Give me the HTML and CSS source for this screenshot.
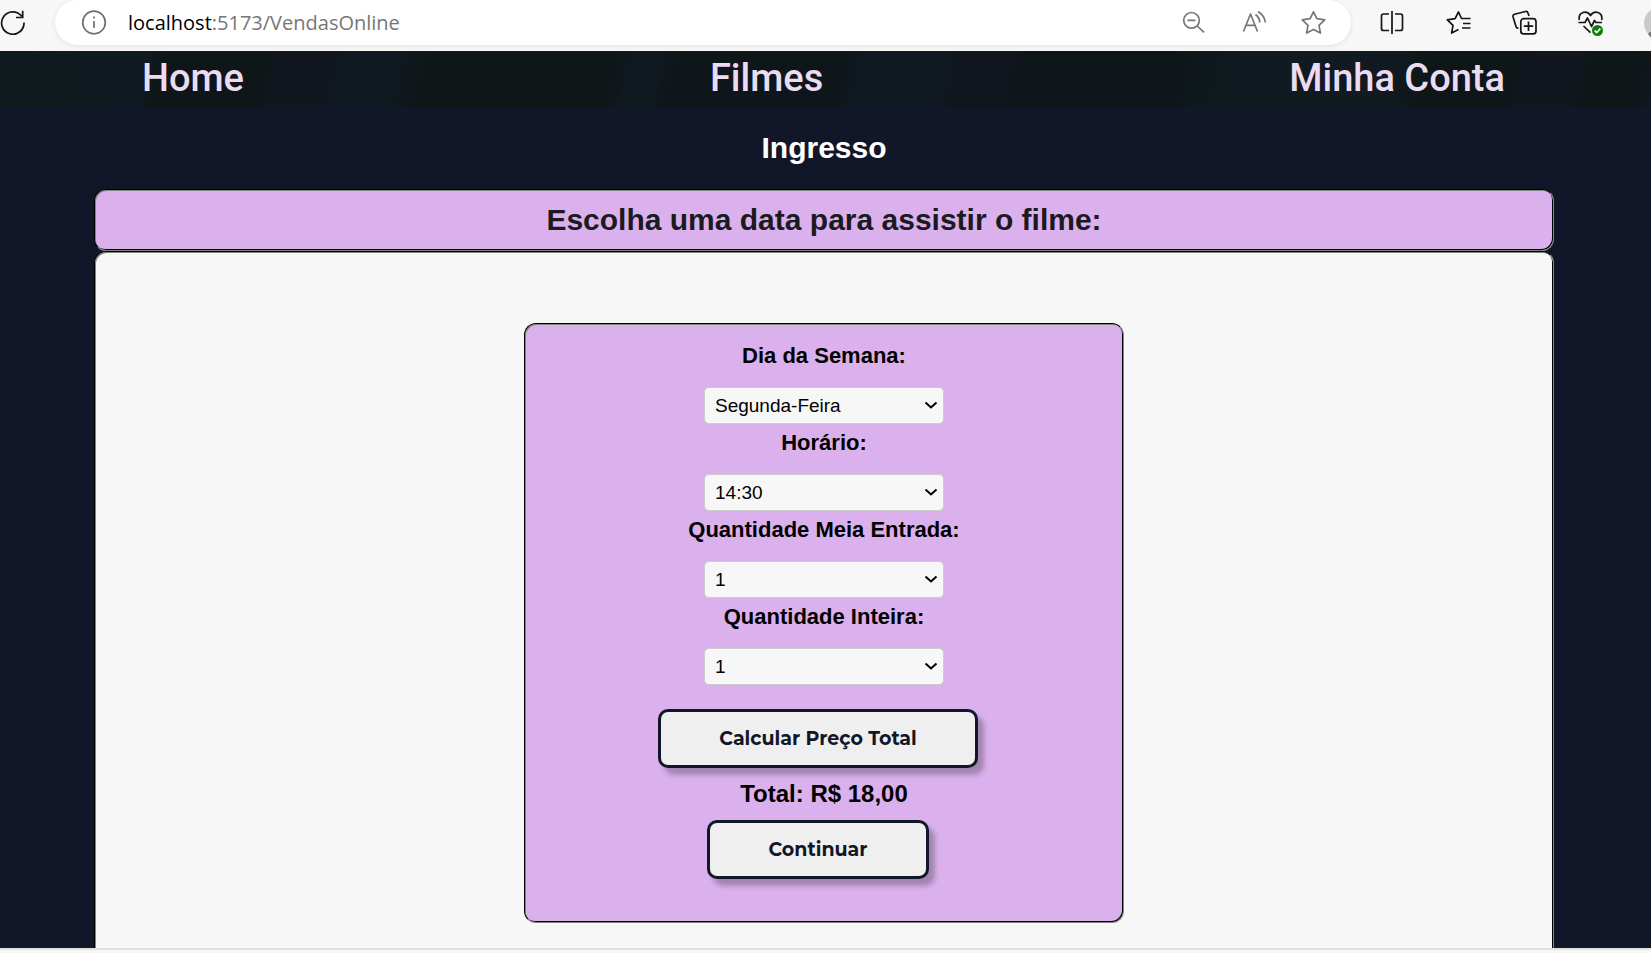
FILE: index.html
```html
<!DOCTYPE html>
<html lang="pt-BR">
<head>
<meta charset="utf-8">
<title>Ingresso</title>
<link rel="stylesheet" href="styles.css">
</head>
<body>
<header class="toolbar">
  <button class="tool reload" aria-label="Atualizar"><svg width="26" height="26" viewBox="0 0 26 26"><path d="M24 12.5A11.2 11.2 0 1 1 21.7 6.2M22.7 .8V7.5H16"/></svg></button>
  <div class="address">
    <svg class="info" width="26" height="26" viewBox="0 0 26 26"><circle cx="13" cy="12.500" r="11.3"/><path d="M13 11V18M13 6.500V8.500"/></svg>
    <span class="url"><span class="host">localhost</span>:5173/VendasOnline</span>
    <button class="tool muted" aria-label="Zoom"><svg width="26" height="26" viewBox="0 0 26 26"><circle cx="10.500" cy="10.300" r="7.8"/><path d="M6.500 10.300H14.500M16.200 16L23 22.300"/></svg></button>
    <button class="tool muted" aria-label="Ler em voz alta"><svg width="26" height="26" viewBox="0 0 26 26"><path d="M2.500 21.500L9.500 4L16.500 21.500M5 15.300H14M14.500 4.500Q18.500 7.500 18.800 12.500M17 1.500Q23.500 5.500 24.300 12.500"/></svg></button>
    <button class="tool muted" aria-label="Favoritar"><svg width="26" height="26" viewBox="0 0 26 26"><path d="M12.500 1.800L15.900 8.700L23.700 9.900L18 15.400L19.400 23.100L12.500 19.500L5.600 23.100L7 15.400L1.300 9.900L9.100 8.700Z"/></svg></button>
  </div>
  <button class="tool" aria-label="Dividir tela"><svg width="26" height="26" viewBox="0 0 26 26"><path d="M10 4H4.500Q2.500 4 2.500 6V18.500Q2.500 20.500 4.500 20.500H10M16 4H21.500Q23.500 4 23.500 6V18.500Q23.500 20.500 21.500 20.500H16M13 1V24"/></svg></button>
  <button class="tool" aria-label="Favoritos"><svg width="26" height="26" viewBox="0 0 26 26"><path d="M18 8.500H16.500L13.500 2L10.100 8.700L2.300 9.900L8 15.400L6.600 23.100L13.500 19.500M16 8.500H25.500M18 13.500H25.500M17 18H25.500"/></svg></button>
  <button class="tool" aria-label="Coleções"><svg width="26" height="26" viewBox="0 0 26 26"><path d="M18 6L17 3Q16.500 1 14.500 1.500L3.500 4.300Q1.500 4.800 2 6.800L5 16.500Q5.500 18.300 7.500 18M17.500 11.500V20.900M12.800 16.200H22.200"/><rect x="9.800" y="8.700" width="15.200" height="15.200" rx="3"/></svg></button>
  <button class="tool" aria-label="Desempenho"><svg width="26" height="26" viewBox="0 0 26 26"><path d="M2.300 10C1 1.500 10 0 13.500 5.500C17 0 26 1.500 24.700 10M1.500 12.500H8L10.500 8L14.500 16.500L17.500 10.500L19 12.500H25M6.500 16L13.500 22.700"/><circle class="ok" cx="20.500" cy="20.500" r="5.500"/><path class="tick" d="M17.700 20.700L19.700 22.500L23.400 18.700"/></svg></button>
  <svg class="avatar" width="7" height="32" viewBox="0 0 7 32"><circle cx="16" cy="16" r="16" fill="#ccc9c6"/><path d="M4 27Q7 23 12 23V32H8Z" fill="#77736f"/></svg>
</header>
<div class="page">
  <nav class="menu">
    <a href="#home">Home</a>
    <a href="#filmes">Filmes</a>
    <a href="#conta">Minha Conta</a>
  </nav>
  <main class="content">
    <h1 class="title">Ingresso</h1>
    <h2 class="banner">Escolha uma data para assistir o filme:</h2>
    <section class="panel">
      <form class="ticket">
        <label for="dia">Dia da Semana:</label>
        <select id="dia"><option>Segunda-Feira</option></select>
        <label for="hora">Horário:</label>
        <select id="hora"><option>14:30</option></select>
        <label for="meia">Quantidade Meia Entrada:</label>
        <select id="meia"><option>1</option></select>
        <label for="inteira">Quantidade Inteira:</label>
        <select id="inteira"><option>1</option></select>
        <button class="action" type="button">Calcular Preço Total</button>
        <p class="total">Total: R$ 18,00</p>
        <button class="action" type="button">Continuar</button>
      </form>
    </section>
  </main>
</div>
<div class="frame-edge"></div>
</body>
</html>
```

FILE: styles.css
```css
* {
  box-sizing: border-box;
}

body {
  margin: 0;
  height: 100vh;
  display: flex;
  flex-direction: column;
  overflow: hidden;
  background: #f7f7f7;
  font-family: "Liberation Sans", Arial, sans-serif;
}

.toolbar {
  flex: none;
  display: flex;
  align-items: flex-start;
  gap: 40px;
  height: 51px;
  overflow: hidden;
}

.tool {
  flex: none;
  width: 26px;
  height: 26px;
  margin-top: 10px;
  padding: 0;
  border: 0;
  background: none;
  color: #151515;
}

.toolbar svg {
  display: block;
  fill: none;
  stroke: currentColor;
  stroke-width: 1.7;
  stroke-linejoin: round;
}

.toolbar .ok {
  fill: #107c10;
  stroke: none;
}

.toolbar .tick {
  stroke: #fff;
}

.toolbar .avatar {
  flex: none;
  margin: 7px 0 0 1px;
  stroke: none;
}

.reload {
  margin-right: -11px;
}

.address {
  flex: 1;
  display: flex;
  align-items: flex-start;
  gap: 34px;
  height: 45px;
  margin-right: -12px;
  padding: 0 24px 0 26px;
  border-radius: 23px;
  background: #fff;
  box-shadow: 0 1px 5px #00000018;
}

.info {
  margin: 10px -13px 0 0;
  color: #6e6e6e;
}

.address .muted {
  color: #767676;
}

.url {
  flex: 1;
  color: #767676;
  font: 20px/45px "Open Sans", "Noto Sans", sans-serif;
}

.host {
  color: #000;
}

.page {
  flex: 1;
  min-height: 0;
  display: flex;
  flex-direction: column;
  overflow: hidden;
  background: #111729;
}

.menu {
  flex: none;
  display: flex;
  justify-content: space-between;
  height: 56px;
  padding: 0 146px 0 142px;
  background:
    linear-gradient(105deg, #0f1a1e 0 2%, #101a22 8% 9%, #0e1618 10% 16%, #11161f 17% 20%, #101921 21% 24%, #0e1618 26% 37%, #101820 38% 40%, #0e1619 41% 51%, #101922 52% 57%, #11151d 58% 61%, #0d1518 62% 70%, #101a20 75% 84%, #0e1618 86% 91%, #11161f 92% 95%, #0e1618 96% 98%, #11161f);
}

.menu a {
  color: #ebdcf2;
  font: 500 38px/54px Roboto, sans-serif;
  text-decoration: none;
}

.content {
  flex: 1;
  display: flex;
  flex-direction: column;
  margin: 0 97px 0 94px;
}

.title {
  margin: 24px 0;
  color: #fff;
  font-size: 30px;
  line-height: 34px;
  text-align: center;
}

/* two-tone engraved frame: black and grey lines side by side */
.banner,
.panel,
.ticket {
  border: 1px solid;
  border-color: #000 #82857c #82857c #000;
  border-radius: 12px;
  box-shadow: inset 1px 1px #82857c, inset -1px -1px #000;
}

.banner {
  margin: 0;
  background: #dab1ec;
  color: #1b1b1f;
  font-size: 30px;
  line-height: 60px;
  text-align: center;
}

.panel {
  flex: none;
  padding: 71px 20px;
  background: #f7f7f7;
}

.ticket {
  display: flex;
  flex-direction: column;
  align-items: center;
  width: 600px;
  max-width: 100%;
  height: 600px;
  margin: 0 auto;
  padding-top: 13px;
  background: #dab1ec;
}

.ticket label {
  margin-bottom: 12px;
  color: #000;
  font-size: 22px;
  font-weight: bold;
  line-height: 38px;
}

.ticket select {
  appearance: none;
  width: 240px;
  height: 37px;
  padding: 0 10px;
  border: 1px solid #ccc;
  border-radius: 5px;
  background: #f7f7f7 url("data:image/svg+xml,%3Csvg xmlns='http://www.w3.org/2000/svg' width='14' height='9'%3E%3Cpath d='M1.500 1.500L7 6.500L12.500 1.500' fill='none' stroke='%23000' stroke-width='2'/%3E%3C/svg%3E") no-repeat right 5px center;
  color: #000;
  font: 19px "Liberation Sans", Arial, sans-serif;
}

.action {
  height: 59px;
  margin-right: 12px;
  padding: 0 58px;
  border: 3px solid #111729;
  border-radius: 10px;
  background: #efefef;
  box-shadow: 6px 7px 5px #00000040;
  color: #111729;
  font: bold 19px Montserrat, Inter, sans-serif;
}

select + .action {
  margin-top: 24px;
}

.total {
  margin: 6px 0;
  color: #000;
  font-size: 24px;
  font-weight: bold;
  line-height: 40px;
}

.frame-edge {
  flex: none;
  height: 5px;
  border-top: 2px solid #e0e0e0;
  background: #f7f7f7;
}
```
